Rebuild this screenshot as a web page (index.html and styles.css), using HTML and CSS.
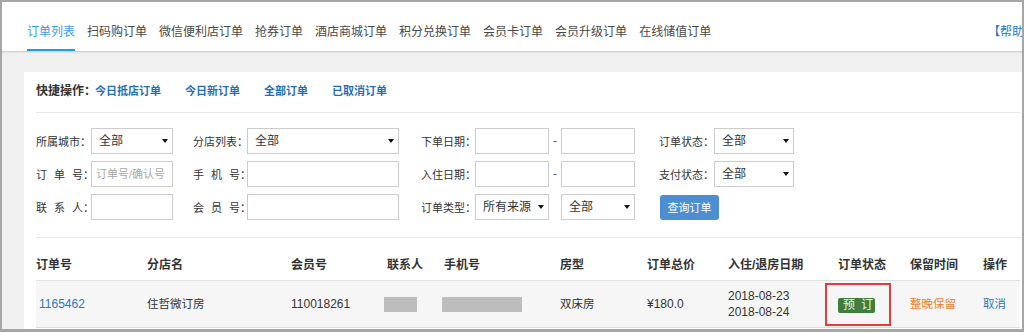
FILE: index.html
```html
<!DOCTYPE html>
<html lang="zh-CN">
<head>
    <meta charset="UTF-8">
    <meta name="viewport" content="width=device-width, initial-scale=1.0">
    <title>订单列表</title>
    <link rel="stylesheet" href="styles.css">
</head>
<body>
    <div class="frame">
        <div class="tabs">
            <a class="tab active">订单列表</a>
            <a class="tab">扫码购订单</a>
            <a class="tab">微信便利店订单</a>
            <a class="tab">抢券订单</a>
            <a class="tab">酒店商城订单</a>
            <a class="tab">积分兑换订单</a>
            <a class="tab">会员卡订单</a>
            <a class="tab">会员升级订单</a>
            <a class="tab">在线储值订单</a>
            <a class="help">【帮助】</a>
        </div>
        <div class="content">
            <div class="panel">
                <div class="quick">
                    <span class="quick-label">快捷操作：</span>
                    <a class="quick-link first">今日抵店订单</a>
                    <a class="quick-link">今日新订单</a>
                    <a class="quick-link">全部订单</a>
                    <a class="quick-link">已取消订单</a>
                </div>

                <div class="filters">
                    <div class="filter-row">
                        <label class="lbl">所属城市：</label>
                        <span class="sel w82"><select><option>全部</option></select></span>
                        <label class="lbl c2">分店列表：</label>
                        <span class="sel w152"><select><option>全部</option></select></span>
                        <label class="lbl c3">下单日期：</label>
                        <input class="inp w74" type="text">
                        <span class="dash">-</span>
                        <input class="inp w74" type="text">
                        <label class="lbl c4">订单状态：</label>
                        <span class="sel w80"><select><option>全部</option></select></span>
                    </div>
                    <div class="filter-row">
                        <label class="lbl"><span class="spread">订单</span>号：</label>
                        <input class="inp w82" type="text" placeholder="订单号/确认号">
                        <label class="lbl c2"><span class="spread">手机</span>号：</label>
                        <input class="inp w152" type="text">
                        <label class="lbl c3">入住日期：</label>
                        <input class="inp w74" type="text">
                        <span class="dash">-</span>
                        <input class="inp w74" type="text">
                        <label class="lbl c4">支付状态：</label>
                        <span class="sel w80"><select><option>全部</option></select></span>
                    </div>
                    <div class="filter-row">
                        <label class="lbl"><span class="spread">联系</span>人：</label>
                        <input class="inp w82" type="text">
                        <label class="lbl c2"><span class="spread">会员</span>号：</label>
                        <input class="inp w152" type="text">
                        <label class="lbl c3">订单类型：</label>
                        <span class="sel w74"><select><option>所有来源</option></select></span>
                        <span class="dash"></span>
                        <span class="sel w74"><select><option>全部</option></select></span>
                        <button class="btn-search">查询订单</button>
                    </div>
                </div>

                <table class="orders">
                    <colgroup>
                        <col style="width:111px">
                        <col style="width:144px">
                        <col style="width:96px">
                        <col style="width:57px">
                        <col style="width:116px">
                        <col style="width:87px">
                        <col style="width:81px">
                        <col style="width:110px">
                        <col style="width:72px">
                        <col style="width:73px">
                        <col>
                    </colgroup>
                    <thead>
                        <tr>
                            <th>订单号</th>
                            <th>分店名</th>
                            <th>会员号</th>
                            <th>联系人</th>
                            <th>手机号</th>
                            <th>房型</th>
                            <th>订单总价</th>
                            <th>入住/退房日期</th>
                            <th>订单状态</th>
                            <th>保留时间</th>
                            <th>操作</th>
                        </tr>
                    </thead>
                    <tbody>
                        <tr>
                            <td class="order-no"><a>1165462</a></td>
                            <td>住哲微订房</td>
                            <td class="num">110018261</td>
                            <td><span class="mask contact"></span></td>
                            <td><span class="mask phone"></span></td>
                            <td>双床房</td>
                            <td class="num">¥180.0</td>
                            <td class="num">2018-08-23<br>2018-08-24</td>
                            <td><span class="mark"><span class="badge"><span class="badge-gap">预</span>订</span></span></td>
                            <td class="keep">整晚保留</td>
                            <td><a class="cancel">取消</a></td>
                        </tr>
                    </tbody>
                </table>
            </div>
        </div>
    </div>
</body>
</html>
```

FILE: styles.css
```css
body {
    margin: 0;
    font-family: "Liberation Sans", "Noto Sans CJK SC", sans-serif;
    font-size: 12px;
    color: #333;
}
.frame {
    width: 1024px;
    height: 332px;
    box-sizing: border-box;
    border: 2px solid #a6a6a6;
    border-bottom-width: 3px;
    overflow: hidden;
    background: #f0f0f0;
    display: flex;
    flex-direction: column;
}

/* top tabs */
.tabs {
    display: flex;
    flex: none;
    height: 49px;
    padding-left: 25px;
    background: #fff;
    border-bottom: 1px solid #d2d2d2;
    box-shadow: 0 1px 1px #e4e4e4;
}
.tab {
    padding: 22px 0 9px;
    margin-right: 12px;
    line-height: 16px;
    color: #484848;
    border-bottom: 2px solid transparent;
    white-space: nowrap;
}
.tab.active {
    color: #3b9de2;
    border-bottom-color: #1e9de8;
}
.help {
    margin-left: auto;
    margin-right: -14px;
    padding-top: 22px;
    line-height: 16px;
    color: #2a78c4;
    white-space: nowrap;
}

.content {
    flex: 1;
    display: flex;
    flex-direction: column;
    padding: 20px 0 0 22px;
}
.panel {
    flex: 1;
    background: #fff;
    padding: 0 1px 0 12px;
}

/* quick links */
.quick {
    display: flex;
    padding: 11px 0 13px;
    line-height: 16px;
    border-bottom: 1px solid #e8e8e8;
    font-weight: bold;
}
.quick-label {
    width: 59px;
    color: #333;
    white-space: nowrap;
}
.quick-link {
    margin-left: 24px;
    font-size: 11px;
    color: #1f6fb8;
}
.quick-link.first {
    margin-left: 0;
}

/* filter form */
.filters {
    display: flex;
    flex-direction: column;
    gap: 7px;
    padding: 15px 0 17px;
    border-bottom: 1px solid #e8e8e8;
}
.filter-row {
    display: flex;
    align-items: center;
    height: 26px;
}
.lbl {
    flex: none;
    width: 55px;
    font-size: 11px;
    white-space: nowrap;
    color: #333;
}
.lbl.c2 { margin-left: 20px; width: 54px; }
.lbl.c3 { margin-left: 22px; width: 54px; }
.lbl.c4 { margin-left: 24px; width: 55px; }
.spread {
    letter-spacing: 7px;
}
.w74 { width: 74px; }
.w80 { width: 80px; }
.w82 { width: 82px; }
.w152 { width: 152px; }
.sel {
    position: relative;
    flex: none;
    height: 26px;
}
.sel select {
    width: 100%;
    height: 100%;
    appearance: none;
    -webkit-appearance: none;
    border: 1px solid #ccc;
    border-radius: 0;
    background: #fff;
    padding: 0 0 0 7px;
    font-family: inherit;
    font-size: 12px;
    color: #333;
    outline: none;
}
.sel::after {
    content: "";
    position: absolute;
    right: 5px;
    top: 11px;
    border-left: 3px solid transparent;
    border-right: 3px solid transparent;
    border-top: 4px solid #111;
    pointer-events: none;
}
.inp {
    flex: none;
    height: 26px;
    box-sizing: border-box;
    border: 1px solid #ccc;
    padding: 0 4px;
    font-family: inherit;
    font-size: 12px;
    color: #333;
    outline: none;
}
.inp::placeholder {
    color: #a8a8a8;
    font-size: 11px;
}
.dash {
    flex: none;
    width: 12px;
    text-align: center;
    color: #555;
}
.btn-search {
    flex: none;
    margin-left: 25px;
    width: 59px;
    height: 25px;
    border: none;
    border-radius: 3px;
    background: #4b8ed1;
    color: #fff;
    font-family: inherit;
    font-size: 11px;
    padding: 0;
}

/* order table */
.orders {
    width: 984px;
    border-collapse: collapse;
    table-layout: fixed;
}
.orders th {
    text-align: left;
    font-weight: bold;
    padding: 19px 0 7px;
    line-height: 16px;
    color: #333;
    border-bottom: 1px solid #e2e2e2;
    white-space: nowrap;
}
.orders td {
    height: 46px;
    padding: 0;
    background: #f6f6f6;
    border-bottom: 1px solid #dcdcdc;
    line-height: 16px;
    font-size: 11.5px;
    white-space: nowrap;
}
.orders td.num {
    font-size: 12px;
}
.order-no a {
    padding-left: 3px;
    font-size: 12px;
    color: #2b78c2;
}
.mask {
    display: inline-block;
    height: 15px;
    background: #bdbdbd;
    vertical-align: middle;
}
.mask.contact {
    width: 33px;
    margin-left: -3px;
}
.mask.phone {
    width: 80px;
    margin-left: -2px;
}
.mark {
    display: inline-block;
    margin-left: -13px;
    padding: 13px 14px 11px 11px;
    border: 2px solid #e53b3b;
    line-height: 15px;
    vertical-align: middle;
}
.badge {
    display: block;
    width: 37px;
    height: 15px;
    box-sizing: border-box;
    padding-left: 5px;
    border-radius: 2px;
    background: #3f7e3c;
    color: #eef5e8;
    font-size: 12px;
    line-height: 15px;
    white-space: nowrap;
}
.badge-gap {
    margin-right: 6px;
}
.keep {
    color: #f07b2c;
}
.cancel {
    color: #2b78c2;
}
```
